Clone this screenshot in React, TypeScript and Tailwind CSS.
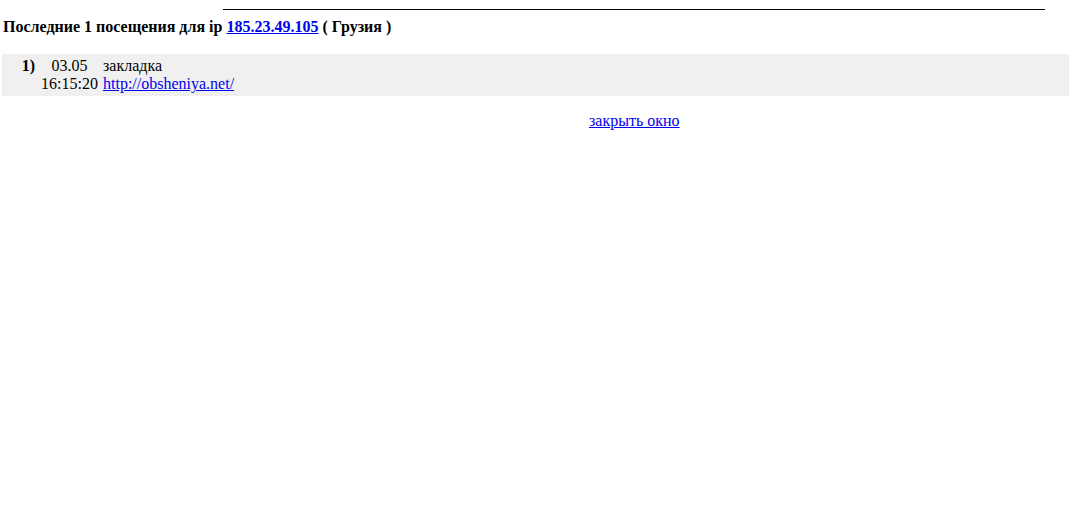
export default function App() {
  const serif = { fontFamily: '"Liberation Serif", "Times New Roman", serif' };
  return (
    <div className="min-h-[512px] bg-white text-black text-[16px] leading-[18px]" style={serif}>
      <div className="pt-[9px]">
        <div className="ml-[223px] w-[822px] border-t border-black" />
      </div>

      <h1 className="mt-[8px] ml-[3px] font-bold text-[16px] leading-[18px]">
        Последние 1 посещения для ip{' '}
        <a href="#" className="text-[#0000ee] underline">185.23.49.105</a> ( Грузия )
      </h1>

      <div className="mt-[18px] ml-[2px] flex bg-[#f0f0f0] py-[3px]">
        <div className="w-[33px] text-right font-bold">1)</div>
        <div className="ml-[6px] w-[57px] text-center">
          <div>03.05</div>
          <div>16:15:20</div>
        </div>
        <div className="ml-[5px]">
          <div>закладка</div>
          <a href="#" className="text-[#0000ee] underline">http://obsheniya.net/</a>
        </div>
      </div>

      <div className="mt-[16px] pl-[589px]">
        <a href="#" className="text-[#0000ee] underline">закрыть окно</a>
      </div>
    </div>
  );
}
